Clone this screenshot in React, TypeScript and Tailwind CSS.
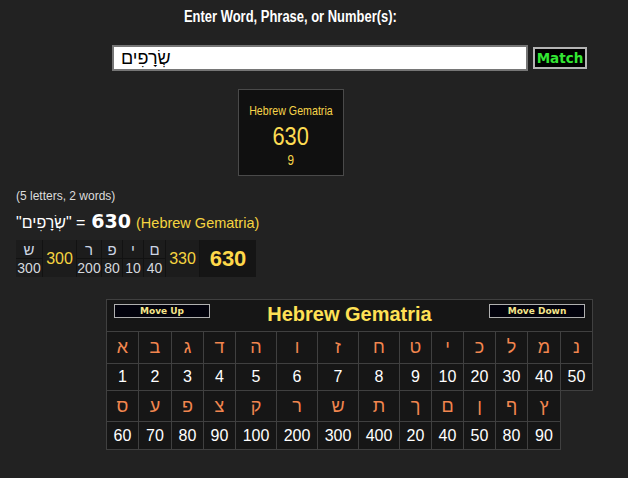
import React from "react";

const arial = "font-['Liberation_Sans',Arial,'DejaVu_Sans',sans-serif]";
const verdana = "font-['DejaVu_Sans',Verdana,sans-serif]";

const row1 = [
  ["א", 1], ["ב", 2], ["ג", 3], ["ד", 4], ["ה", 5], ["ו", 6], ["ז", 7],
  ["ח", 8], ["ט", 9], ["י", 10], ["כ", 20], ["ל", 30], ["מ", 40], ["נ", 50],
] as const;

const row2 = [
  ["ס", 60], ["ע", 70], ["פ", 80], ["צ", 90], ["ק", 100], ["ר", 200], ["ש", 300],
  ["ת", 400], ["ך", 20], ["ם", 40], ["ן", 50], ["ף", 80], ["ץ", 90],
] as const;

const word = "שְׂרָפִים";

function LetterCell({ ch, h }: { ch: string; h: string }) {
  return (
    <div className={`flex items-center justify-center border-r border-b border-[#404040] bg-[#161616] text-[18px] text-[#f2864f] ${h}`}>
      {ch}
    </div>
  );
}

function NumCell({ n, h }: { n: number; h: string }) {
  return (
    <div className={`flex items-center justify-center border-r border-b border-[#404040] bg-[#161616] text-[16px] text-white ${h}`}>
      {n}
    </div>
  );
}

function ChartTable() {
  return (
    <div className={`ml-[106px] mt-[22px] grid w-[487px] grid-cols-[32px_33px_32px_32px_41px_41px_41px_41px_32px_32px_32px_32px_33px_32px] border-l border-t border-[#404040] ${arial}`}>
      <div className="col-span-14 grid h-[32px] grid-cols-[1fr_auto_1fr] items-start border-r border-b border-[#404040] bg-[#161616] px-[7px] pt-[4px]">
        <button className={`h-[14px] w-[96px] justify-self-start border border-[#b0b0b0] bg-[#02020c] text-[9px] leading-[12px] font-bold text-[#f5e68a] ${verdana}`}>
          Move Up
        </button>
        <div className="mt-[-1px] text-[20px] leading-[23px] font-bold text-[#ffe155]">Hebrew Gematria</div>
        <button className={`h-[14px] w-[96px] justify-self-end border border-[#b0b0b0] bg-[#02020c] text-[9px] leading-[12px] font-bold text-[#f5e68a] ${verdana}`}>
          Move Down
        </button>
      </div>
      {row1.map(([ch]) => (
        <LetterCell key={"a" + ch} ch={ch} h="h-[32px]" />
      ))}
      {row1.map(([ch, n]) => (
        <NumCell key={"b" + ch} n={n} h="h-[27px]" />
      ))}
      {row2.map(([ch]) => (
        <LetterCell key={"c" + ch} ch={ch} h="h-[31px]" />
      ))}
      <div />
      {row2.map(([ch, n]) => (
        <NumCell key={"d" + ch} n={n} h="h-[28px]" />
      ))}
      <div />
    </div>
  );
}

function Breakdown() {
  const letter = "flex items-center justify-center bg-[#1c1c1c] text-[15px] leading-none text-[#cdd6e4]";
  const value = "flex items-center justify-center bg-[#1c1c1c] text-[14px] leading-none text-[#d4d8de]";
  const sub = "row-span-2 flex items-center justify-center bg-[#1c1c1c] text-[16px] text-[#f5d440]";
  return (
    <div className={`ml-[16px] mt-[6px] grid w-fit grid-flow-col grid-cols-[26px_33px_24px_20px_20px_21px_33px_56px] grid-rows-[18px_18px] gap-px bg-[#121212] ${arial}`}>
      <div className={letter}>ש</div>
      <div className={value}>300</div>
      <div className={sub}>300</div>
      <div className={letter}>ר</div>
      <div className={value}>200</div>
      <div className={letter}>פ</div>
      <div className={value}>80</div>
      <div className={letter}>י</div>
      <div className={value}>10</div>
      <div className={letter}>ם</div>
      <div className={value}>40</div>
      <div className={sub}>330</div>
      <div className="row-span-2 flex items-center justify-center bg-[#151515] text-[22px] font-bold text-[#ffd84a]">630</div>
    </div>
  );
}

export default function App() {
  return (
    <div className={`min-h-[478px] w-full bg-[#222222] pt-[8px] pb-[20px] ${arial}`}>
      <div className="w-[581px] text-center text-[16px] leading-[18px] font-bold text-white">
        <span className="inline-block scale-x-[0.81]">Enter Word, Phrase, or Number(s):</span>
      </div>

      <div className="mt-[19px] ml-[112px] flex items-center">
        <input
          readOnly
          value={word}
          className={`h-[26px] w-[416px] border-2 border-[#767676] bg-white px-[7px] text-[18px] text-black outline-none ${arial}`}
        />
        <button className={`ml-[5px] h-[22px] w-[54px] border-2 border-[#b4b4b4] bg-black text-[13.5px] leading-[16px] font-bold text-[#33e633] ${verdana}`}>
          Match
        </button>
      </div>

      <div className="mt-[18px] flex w-[581px] justify-center">
        <div className="flex h-[87px] w-[106px] flex-col items-center border border-[#4a4a4a] bg-[#101010] pt-[13px]">
          <div className="text-[13px] leading-[15px] text-[#f7d54a]">
            <span className="inline-block scale-x-[0.82]">Hebrew Gematria</span>
          </div>
          <div className="mt-[4px] text-[26px] leading-[28px] text-[#fddc53]">
            <span className="inline-block scale-x-[0.84]">630</span>
          </div>
          <div className="mt-[2px] text-[14px] leading-[16px] text-[#f7d54a]">
            <span className="inline-block scale-x-[0.84]">9</span>
          </div>
        </div>
      </div>

      <div className="mt-[13px] ml-[16px] text-[12px] leading-[14px] text-[#dddddd]">(5 letters, 2 words)</div>

      <div className="mt-[7px] ml-[16px] flex items-baseline text-[16px] leading-[22px] text-white">
        <span>
          "<bdi>{word}</bdi>" ={" "}
        </span>
        <span className={`ml-[6px] text-[19px] font-bold ${verdana}`}>630</span>
        <span className="ml-[5px] text-[14.5px] text-[#f5d440]">(Hebrew Gematria)</span>
      </div>

      <Breakdown />

      <ChartTable />
    </div>
  );
}
